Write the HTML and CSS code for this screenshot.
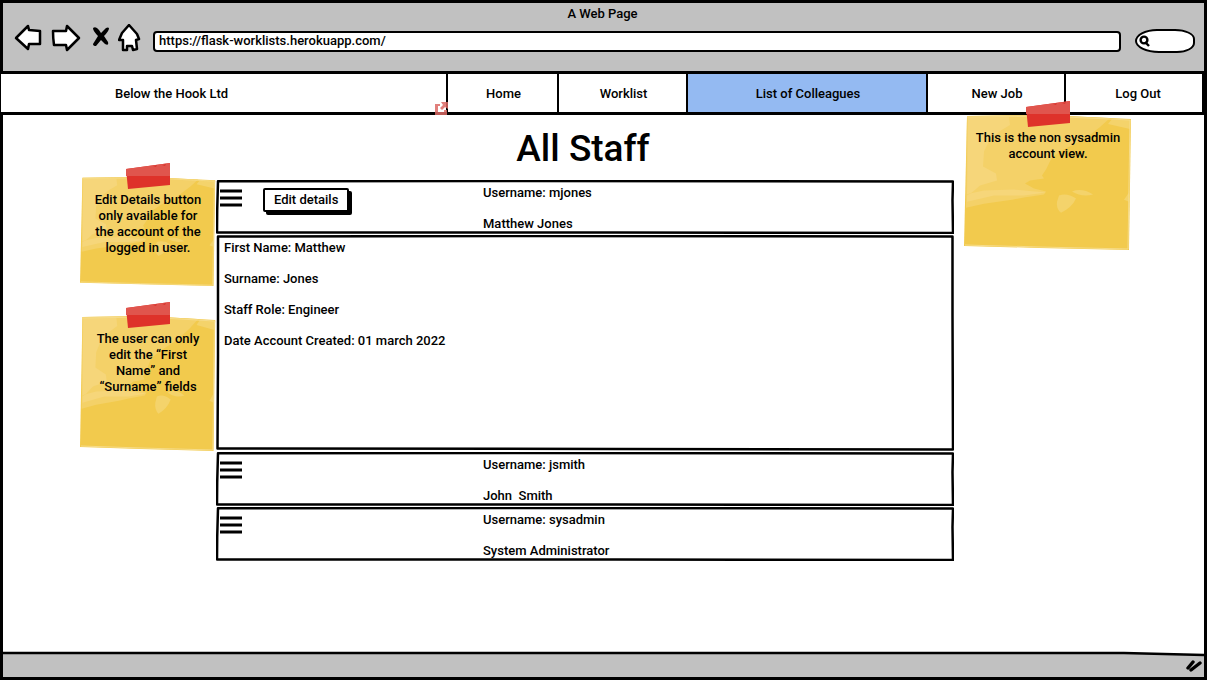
FILE: index.html
```html
<!DOCTYPE html>
<html lang="en">
<head>
<meta charset="utf-8">
<meta name="viewport" content="width=device-width, initial-scale=1">
<title>All Staff</title>
<link rel="stylesheet" href="styles.css">
</head>
<body>
<svg class="defs" width="0" height="0" aria-hidden="true">
  <symbol id="sheet" viewBox="0 0 168 134" preserveAspectRatio="none">
    <path fill="#f2ca4d" d="M3 1 80 0 167 4 165 134 75 132 0 130Z"/>
    <path fill="#f4d168" d="M3 1 80 0 146 3 136 12 120 24 100 34 88 42 82 54 78 60 80 63 66 65 61 68 70 73 82 76 80 79 60 82 48 84 20 88 2 92Z"/>
    <path fill="#f6d67a" d="M4 2 45 2 46 10 36 16 26 24 20 36 19 51 32 58 33 65 16 70 8 77 3 79Z"/>
    <path fill="#f6d67a" d="M6 78 20 75 50 74 82 77 60 80 30 80 3 86 3 80Z"/>
    <path fill="#f4d36b" d="M95 80Q103 77 112 83Q108 92 97 97 92 93 93 86ZM108 76Q118 72 129 79 118 82 108 76ZM160 84 165 77 165 86ZM148 4 167 5 166 14 144 9Z"/>
    <path fill="none" stroke="#f6dc8a" stroke-width="1" d="M3 2 80 1 166 5 164 133M1 129 75 131 164 133"/>
  </symbol>
  <symbol id="tape" viewBox="0 0 44 26">
    <path fill="#de322a" d="M0 6 44 0V22L2 26Z"/>
    <path fill="#e0554d" d="M0 6 44 0V13H0Z"/>
    <path fill="#d8352e" d="M27 3l4-1-1 2zM36 2l4-1-1 2z"/>
  </symbol>
  <symbol id="menu" viewBox="0 0 22 18">
    <path stroke="#000" stroke-width="3" d="M0 2H22M0 9H22M0 16H22"/>
  </symbol>
  <symbol id="frame" viewBox="0 0 738 54" preserveAspectRatio="none">
    <path class="frame-line" vector-effect="non-scaling-stroke" d="M2 1.2 300 1 737 1.5 736.5 20 737 53 400 52.6 1 52.5 1.2 30Z"/>
  </symbol>
  <symbol id="frame-tall" viewBox="0 0 738 216" preserveAspectRatio="none">
    <path class="frame-line" vector-effect="non-scaling-stroke" d="M2 1.5 300 1 736.5 1.5 736.5 80 737 214.5 400 214 1.5 213.5 2 120Z"/>
  </symbol>
</svg>

<div class="window">
  <header class="chrome">
    <div class="window-title">A Web Page</div>
    <div class="toolbar">
      <button class="tool" type="button" aria-label="Back">
        <svg width="28" height="28" viewBox="0 0 28 28"><path class="ink" d="M2 14 14 2 15 6 26 7 26 20 15 20 14 25Z"/></svg>
      </button>
      <button class="tool tool-forward" type="button" aria-label="Forward">
        <svg width="30" height="28" viewBox="0 0 30 28"><path class="ink" d="M2 7 15 7 16 2 28 14 16 26 15 21 3 21Q2 14 2 7Z"/></svg>
      </button>
      <button class="tool tool-stop" type="button" aria-label="Stop">
        <svg width="18" height="24" viewBox="0 0 18 24"><path d="M1 2Q4 0 7 4L9 7 14 2Q16 1 17 2 17 5 12 10L16 16Q17 20 13 18L9 14 4 20Q1 20 1 18L6 10Q1 5 1 2Z"/></svg>
      </button>
      <button class="tool" type="button" aria-label="Home">
        <svg width="23" height="28" viewBox="0 0 23 28"><path class="ink" d="M11 1 19 10 21 15 18 16 19 25 15 26 14 22 9 22 9 26 5 26 5 16 1 16 4 9Z"/></svg>
      </button>
      <input class="address" type="text" aria-label="Address" value="https://flask-worklists.herokuapp.com/">
      <label class="search">
        <svg width="12" height="14" viewBox="0 0 12 14" aria-hidden="true"><circle cx="5" cy="6" r="3.4" fill="#fff" stroke="#000" stroke-width="2.4"/><path stroke="#000" stroke-width="2.4" d="M6 8 10 12"/></svg>
        <input type="search" aria-label="Search">
      </label>
    </div>
  </header>

  <nav class="nav">
    <a class="nav-item brand" href="#">Below the Hook Ltd
      <svg class="external" width="13" height="13" viewBox="0 0 13 13" aria-hidden="true"><path fill="#dc6a65" fill-opacity=".85" d="M0 2H5V4H3V10H9V8H12V13H0ZM6 0H13V7L10 5 7 8 5 6 8 3Z"/></svg>
    </a>
    <a class="nav-item" href="#">Home</a>
    <a class="nav-item" href="#">Worklist</a>
    <a class="nav-item active" href="#" aria-current="page">List of Colleagues</a>
    <a class="nav-item" href="#">New Job</a>
    <a class="nav-item" href="#">Log Out</a>
  </nav>

  <div class="page">
    <aside class="notes">
      <div class="note note-short">
        <svg class="sheet" aria-hidden="true"><use href="#sheet"/></svg>
        <svg class="tape" aria-hidden="true"><use href="#tape"/></svg>
        <p>Edit Details button only available for the account of the logged in user.</p>
      </div>
      <div class="note">
        <svg class="sheet" aria-hidden="true"><use href="#sheet"/></svg>
        <svg class="tape" aria-hidden="true"><use href="#tape"/></svg>
        <p>The user can only edit the “First Name” and “Surname” fields</p>
      </div>
    </aside>

    <main class="staff">
      <h1>All Staff</h1>
      <section class="box row">
        <svg class="frame" aria-hidden="true"><use href="#frame"/></svg>
        <button class="menu" type="button" aria-label="Toggle mjones"><svg width="22" height="18"><use href="#menu"/></svg></button>
        <button class="edit" type="button">Edit details</button>
        <div class="lines summary"><p>Username: mjones</p><p>Matthew Jones</p></div>
      </section>
      <section class="box details lines">
        <svg class="frame" aria-hidden="true"><use href="#frame-tall"/></svg>
        <p>First Name: Matthew</p>
        <p>Surname: Jones</p>
        <p>Staff Role: Engineer</p>
        <p>Date Account Created: 01 march 2022</p>
      </section>
      <section class="box row">
        <svg class="frame" aria-hidden="true"><use href="#frame"/></svg>
        <button class="menu" type="button" aria-label="Toggle jsmith"><svg width="22" height="18"><use href="#menu"/></svg></button>
        <div class="lines summary"><p>Username: jsmith</p><p>John  Smith</p></div>
      </section>
      <section class="box row">
        <svg class="frame" aria-hidden="true"><use href="#frame"/></svg>
        <button class="menu" type="button" aria-label="Toggle sysadmin"><svg width="22" height="18"><use href="#menu"/></svg></button>
        <div class="lines summary"><p>Username: sysadmin</p><p>System Administrator</p></div>
      </section>
    </main>

    <aside class="notes-right">
      <div class="note">
        <svg class="sheet" aria-hidden="true"><use href="#sheet"/></svg>
        <svg class="tape" aria-hidden="true"><use href="#tape"/></svg>
        <p>This is the non sysadmin account view.</p>
      </div>
    </aside>
  </div>

  <footer class="status">
    <svg class="status-bg" viewBox="0 0 1200 26" preserveAspectRatio="none" aria-hidden="true">
      <path fill="#c1c1c1" d="M0 2 1120 2 1200 4V26H0Z"/>
      <path fill="none" stroke="#000" stroke-width="2.5" d="M0 2 1120 2 1200 4"/>
    </svg>
    <svg class="grip" width="16" height="14" viewBox="0 0 16 14" aria-hidden="true"><path stroke="#000" stroke-width="3.4" stroke-linecap="round" d="M2 9 7 3M5 11 14 4"/></svg>
  </footer>
</div>
</body>
</html>
```

FILE: styles.css
```css
* { box-sizing: border-box; }

body {
  margin: 0;
  font: 500 13px/16px Roboto, "Liberation Sans", sans-serif;
  color: #000;
  background: #fff;
}

p, h1 { margin: 0; }

button, input { font: inherit; color: inherit; }

button { padding: 0; border: 0; background: none; }

svg { display: block; }

.defs { position: absolute; }

.window {
  display: flex;
  flex-direction: column;
  min-height: 100vh;
  border: 3px solid #000;
}

.chrome {
  padding: 3px 9px 17px 11px;
  border-bottom: 3px solid #000;
  background: #c1c1c1;
}

.window-title {
  padding-right: 4px;
  text-align: center;
}

.toolbar {
  display: flex;
  align-items: center;
  height: 32px;
}

.tool { flex: none; }
.tool-forward { margin-left: 9px; }
.tool-stop { margin: 0 8px 0 11px; }

.ink {
  fill: #fff;
  stroke: #000;
  stroke-width: 2.5;
  stroke-linejoin: round;
}

.address {
  flex: 1;
  min-width: 0;
  height: 21px;
  margin: 6px 14px 0 12px;
  padding: 0 4px 1px;
  border: 2px solid #000;
  border-radius: 4px;
  background: #fff;
}

.search {
  display: flex;
  align-items: center;
  width: 60px;
  height: 24px;
  margin-top: 6px;
  padding-left: 2px;
  border: 2px solid #000;
  border-radius: 22px 20px 18px 24px / 12px 10px 10px 12px;
  background: #fff;
}

.search svg { flex: none; }

.search input {
  width: 100%;
  min-width: 0;
  padding: 0 4px;
  border: 0;
  background: none;
  appearance: none;
}

.nav {
  display: grid;
  grid-template-columns: 447fr 111fr 129fr 240fr 138fr 138fr;
  margin-left: -2px;
  border-bottom: 3px solid #000;
  background: #fff;
}

.nav-item {
  padding: 12px 6px 10px 8px;
  border-right: 2px solid #000;
  text-align: center;
  color: inherit;
  text-decoration: none;
}

.nav-item:last-child { padding-left: 14px; }

.active { background: #94baf2; }

.brand {
  position: relative;
  padding-left: 114px;
  text-align: left;
}

.external {
  position: absolute;
  right: -2px;
  bottom: -3px;
}

.page {
  display: grid;
  grid-template-columns: 213fr 738fr 250fr;
  align-items: start;
  flex: 1;
}

.notes {
  display: grid;
  gap: 16px;
  padding: 48px 0 0 77px;
}

.notes-right {
  max-width: 178px;
  margin-top: -14px;
  padding-left: 10px;
}

.note {
  position: relative;
  min-height: 149px;
  padding: 29px 10px 12px;
  text-align: center;
}

.note-short { min-height: 123px; }

.note p { position: relative; }

.sheet {
  position: absolute;
  inset: 14px 0 0;
  width: 100%;
  height: calc(100% - 14px);
}

.tape {
  position: absolute;
  top: 0;
  left: calc(50% - 22px);
  width: 44px;
  height: 26px;
}

.staff {
  position: relative;
  display: grid;
  gap: 1px;
}

h1 {
  padding: 12px 4px 8px 0;
  font-size: 37px;
  line-height: 44px;
  font-weight: 500;
  text-align: center;
}

.box {
  position: relative;
  background: #fff;
}

.frame {
  position: absolute;
  inset: 0;
  width: 100%;
  height: 100%;
}

.frame-line {
  fill: none;
  stroke: #000;
  stroke-width: 2.5px;
  stroke-linejoin: round;
}

.row {
  display: grid;
  grid-template-columns: 45px 220px 1fr;
  align-items: start;
  padding: 2px;
}

.row > *, .details > p { z-index: 1; }

.menu {
  width: 22px;
  margin: 7px 0 0 2px;
}

.edit {
  justify-self: start;
  margin-top: 6px;
  padding: 2px 9px;
  border: 2px solid #000;
  border-radius: 2px;
  background: #fff;
  box-shadow: 3px 3px 0 #000;
}

.lines {
  display: grid;
  align-content: start;
  gap: 15px;
  white-space: pre;
}

.summary {
  grid-column: 3;
  padding-top: 3px;
}

.details {
  min-height: 216px;
  padding: 5px 8px;
}

.status {
  position: relative;
  display: flex;
  align-items: center;
  justify-content: flex-end;
  height: 26px;
  padding-right: 2px;
}

.status-bg {
  position: absolute;
  inset: 0;
  width: 100%;
  height: 100%;
}

.grip {
  position: relative;
  margin-top: 4px;
}
```
